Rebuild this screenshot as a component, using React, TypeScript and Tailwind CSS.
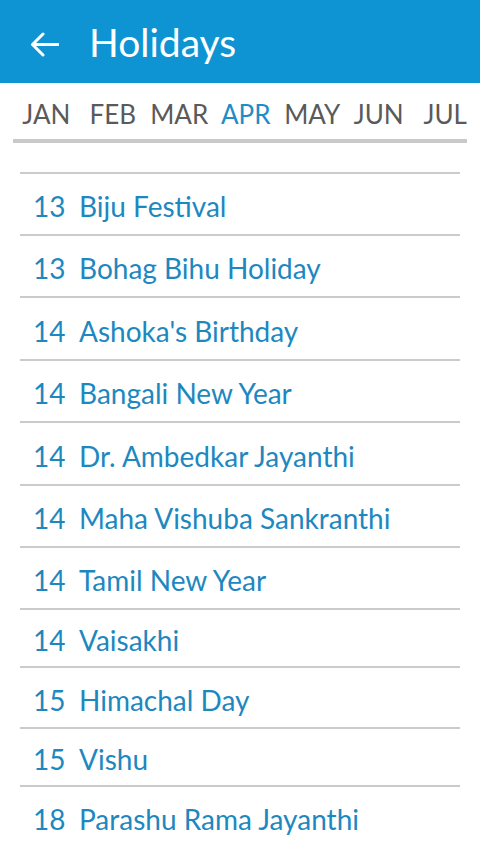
const months = ["JAN", "FEB", "MAR", "APR", "MAY", "JUN", "JUL"];

const holidays = [
  { day: "13", name: "Biju Festival", h: "h-[62px]" },
  { day: "13", name: "Bohag Bihu Holiday", h: "h-[62px]" },
  { day: "14", name: "Ashoka's Birthday", h: "h-[63px]" },
  { day: "14", name: "Bangali New Year", h: "h-[62px]" },
  { day: "14", name: "Dr. Ambedkar Jayanthi", h: "h-[63px]" },
  { day: "14", name: "Maha Vishuba Sankranthi", h: "h-[62px]" },
  { day: "14", name: "Tamil New Year", h: "h-[62px]" },
  { day: "14", name: "Vaisakhi", h: "h-[58px]" },
  { day: "15", name: "Himachal Day", h: "h-[61px]" },
  { day: "15", name: "Vishu", h: "h-[58px]" },
  { day: "18", name: "Parashu Rama Jayanthi", h: "h-[62px]" },
];

export default function App() {
  const active = "APR";

  return (
    <div className="w-[480px] h-[854px] overflow-hidden bg-white font-['Lato','Liberation_Sans',sans-serif]">
      {/* App bar */}
      <header className="h-[83px] bg-[#0e93d3] flex items-center pl-[30px]">
        <svg width="29" height="25" viewBox="0 0 29 25" fill="none" className="mt-[6px]">
          <path
            d="M28 12.5H2.5M13 2L2.5 12.5L13 23"
            stroke="white"
            strokeWidth="3"
            strokeLinecap="round"
            strokeLinejoin="round"
          />
        </svg>
        <h1 className="ml-[30px] text-white text-[39px] leading-[46px]">Holidays</h1>
      </header>

      {/* Month tabs */}
      <div className="mx-[13px] mt-[16px] overflow-hidden border-b-4 border-[#c9c9c9]">
        <div className="flex">
          {months.map((m) => (
            <div
              key={m}
              className={
                m === active
                  ? "w-[66.5px] shrink-0 flex justify-center pb-[10px] -mb-[4px] border-b-4 border-[#1b87c4] text-[#1f8cc6] text-[26px] leading-[30px]"
                  : "w-[66.5px] shrink-0 flex justify-center pb-[10px] text-[#5a5a5a] text-[26px] leading-[30px]"
              }
            >
              {m}
            </div>
          ))}
        </div>
      </div>

      {/* Holiday list */}
      <ul className="mx-[20px] mt-[29px]">
        {holidays.map((item, i) => (
          <li
            key={i}
            className={`${item.h} border-t-2 border-[#cbcbcb] flex items-center pl-[13px] pt-[4px] text-[#1d88bf] text-[28px] leading-[34px]`}
          >
            <span className="w-[46px] shrink-0">{item.day}</span>
            <span>{item.name}</span>
          </li>
        ))}
      </ul>
    </div>
  );
}
